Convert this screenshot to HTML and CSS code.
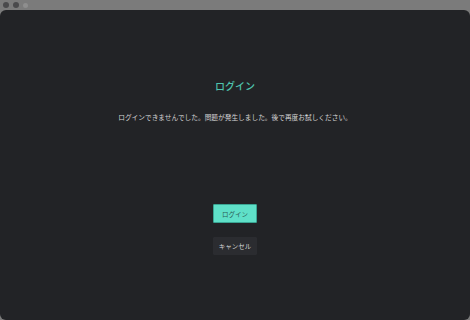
FILE: index.html
```html
<!DOCTYPE html>
<html lang="ja">
<head>
<meta charset="utf-8">
<link rel="stylesheet" href="styles.css">
</head>
<body>
<div class="window">
  <div class="titlebar">
    <span class="dot"></span><span class="dot"></span><span class="dot light"></span>
  </div>
  <main class="panel">
    <h1 class="title">ログイン</h1>
    <p class="message">ログインできませんでした。問題が発生しました。後で再度お試しください。</p>
    <div class="actions">
      <button class="btn primary">ログイン</button>
      <button class="btn secondary">キャンセル</button>
    </div>
  </main>
</div>
</body>
</html>
```
FILE: styles.css
```css
* { box-sizing: border-box; }
html, body { margin: 0; padding: 0; }
body {
  width: 470px;
  height: 320px;
  background: #7b7b7b;
  font-family: "Noto Sans CJK JP", "Noto Sans", sans-serif;
  overflow: hidden;
}
.window {
  display: flex;
  flex-direction: column;
  height: 320px;
}
.titlebar {
  height: 10px;
  display: flex;
  align-items: center;
  gap: 4px;
  padding-left: 3px;
}
.dot {
  width: 6px;
  height: 6px;
  border-radius: 50%;
  background: #4a4a4c;
}
.dot.light { background: #8e8e8e; width: 5px; height: 5px; }
.panel {
  flex: 1;
  background: #222326;
  border-radius: 6px;
  display: flex;
  flex-direction: column;
  align-items: center;
  padding-top: 69px;
}
.title {
  margin: 0;
  font-size: 10px;
  font-weight: 500;
  line-height: 14px;
  color: #4fc4ae;
}
.message {
  margin: 19px 0 0;
  font-size: 6.7px;
  line-height: 10px;
  color: #d4d4d4;
}
.actions {
  margin-top: 82px;
  display: flex;
  flex-direction: column;
  align-items: center;
  gap: 14px;
}
.btn {
  font-family: inherit;
  font-size: 6.5px;
  height: 19px;
  width: 44px;
  padding: 0;
  border-radius: 1px;
  cursor: pointer;
}
.primary {
  background: #5fe0c8;
  border: 1px solid #3aa593;
  color: #2b5e55;
}
.secondary {
  background: #2b2c30;
  border: 1px solid #2b2c30;
  color: #d6d6d6;
  height: 18px;
}
```
